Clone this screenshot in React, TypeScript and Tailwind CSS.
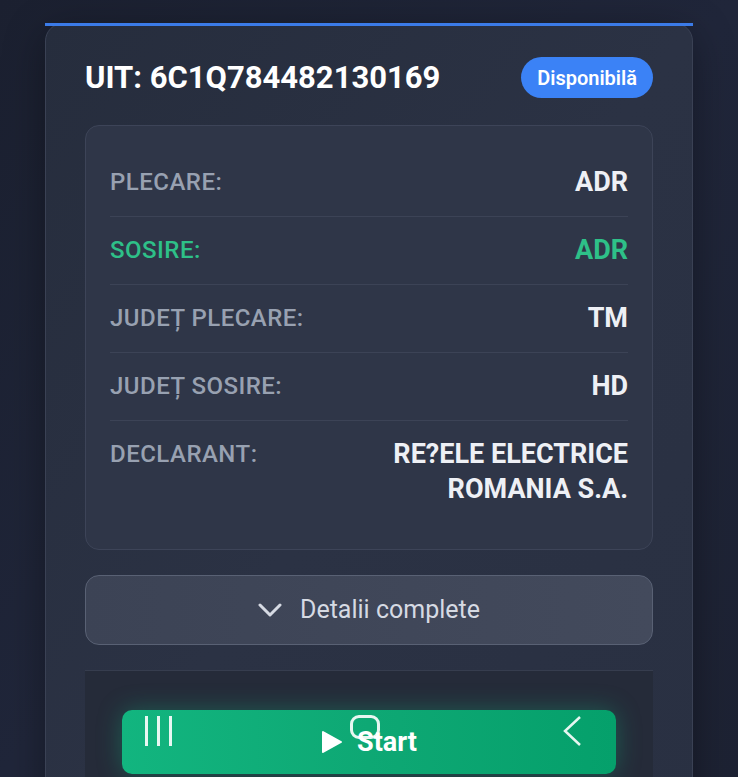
const rows = [
  { label: 'PLECARE:', value: 'ADR' },
  { label: 'SOSIRE:', value: 'ADR', accent: true },
  { label: 'JUDEȚ PLECARE:', value: 'TM' },
  { label: 'JUDEȚ SOSIRE:', value: 'HD' },
  { label: 'DECLARANT:', value: 'RE?ELE ELECTRICE ROMANIA S.A.' },
];

function InfoRow({ label, value, accent, last }: { label: string; value: string; accent?: boolean; last?: boolean }) {
  return (
    <div className={`flex items-start justify-between gap-6 py-4 ${last ? '' : 'border-b border-[#3c4356]'}`}>
      <span
        className={`text-[24px] leading-[35px] font-medium tracking-[0.02em] whitespace-nowrap ${
          accent ? 'text-[#2ec088]' : 'text-[#98a1b1]'
        }`}
      >
        {label}
      </span>
      <span
        className={`text-[27px] leading-[35px] font-bold text-right max-w-[260px] ${
          accent ? 'text-[#2ec088]' : 'text-[#eef0f5]'
        }`}
      >
        {value}
      </span>
    </div>
  );
}

export default function App() {
  return (
    <div
      className="relative h-[777px] w-full overflow-hidden bg-gradient-to-br from-[#1b2030] via-[#20263a] to-[#1d2233] px-[45px] pt-[23px]"
      style={{ fontFamily: 'Roboto, "Noto Sans", sans-serif' }}
    >
      <div className="relative rounded-[18px] border border-[#3a4154] bg-gradient-to-br from-[#262d3d] via-[#2b3244] to-[#293042] px-[39px] pt-[33px] shadow-[0_10px_40px_rgba(0,0,0,0.35)]">
        <div className="absolute -left-px -right-px -top-px h-[3px] bg-[#3b7be8]" />

        <div className="flex items-center justify-between">
          <h1 className="text-[31px] font-bold leading-none text-white">UIT: 6C1Q784482130169</h1>
          <span className="flex h-[41px] items-center rounded-full bg-[#3b82f6] px-[16px] text-[20px] font-semibold text-white">
            Disponibilă
          </span>
        </div>

        <div className="mt-[27px] rounded-[14px] border border-[#3d4458] bg-[#2f3648] px-6 pt-[23px] pb-[26px]">
          {rows.map((r, i) => (
            <InfoRow key={r.label} {...r} last={i === rows.length - 1} />
          ))}
        </div>

        <button className="mt-[25px] flex h-[70px] w-full items-center justify-center gap-[18px] rounded-[14px] border border-[#596174] bg-gradient-to-r from-[#3c4355] to-[#434a5c] text-[25px] text-[#d6dae3]">
          <svg width="24" height="14" viewBox="0 0 24 14">
            <path d="M2 2 L12 12 L22 2" fill="none" stroke="#d6dae3" strokeWidth="3" strokeLinecap="round" strokeLinejoin="round" />
          </svg>
          Detalii complete
        </button>

        <div className="mt-[25px] h-[200px] border-t border-[#363d4e] bg-[#252b39] px-[37px] pt-[39px]">
          <button className="flex h-[64px] w-full items-center justify-center gap-[14px] rounded-[10px] bg-gradient-to-r from-[#12b57f] via-[#0ea874] to-[#05a06b] text-[27px] font-bold text-white shadow-[0_0_24px_rgba(16,185,129,0.35)]">
            <svg width="22" height="24" viewBox="0 0 22 24">
              <path d="M2 2 L20 12 L2 22 Z" fill="white" stroke="white" strokeWidth="2" strokeLinejoin="round" />
            </svg>
            Start
          </button>
        </div>
      </div>

      {/* system navigation bar glyphs drawn over the page */}
      <div className="pointer-events-none absolute left-[145px] top-[716px] flex gap-[9px]">
        <div className="h-[30px] w-[3px] bg-white/90" />
        <div className="h-[30px] w-[3px] bg-white/90" />
        <div className="h-[30px] w-[3px] bg-white/90" />
      </div>
      <div className="pointer-events-none absolute left-[350px] top-[715px] h-[24px] w-[30px] rounded-[9px] border-[3px] border-white/90" />
      <svg className="pointer-events-none absolute left-[560px] top-[715px]" width="24" height="32" viewBox="0 0 24 32">
        <path d="M20 2 L5 16 L20 30" fill="none" stroke="white" strokeOpacity="0.9" strokeWidth="2.5" />
      </svg>
    </div>
  );
}
